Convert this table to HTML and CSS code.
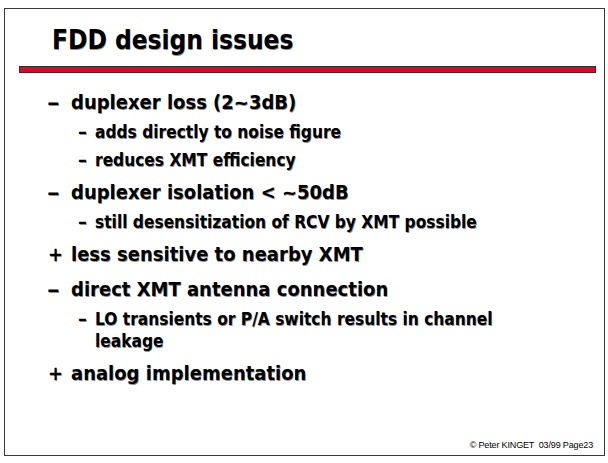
FILE: index.html
```html
<!DOCTYPE html>
<html lang="en">
<head>
<meta charset="utf-8">
<title>FDD design issues</title>
<link rel="stylesheet" href="styles.css">
</head>
<body>
<div class="slide">
  <h1 class="title">FDD design issues</h1>
  <div class="rule"></div>
  <ul class="points">
    <li class="l1"><span class="mark"><span class="dash">–</span></span><span class="txt">duplexer loss (2~3dB)</span></li>
    <li class="l2"><span class="mark"><span class="dash">–</span></span><span class="txt">adds directly to noise figure</span></li>
    <li class="l2"><span class="mark"><span class="dash">–</span></span><span class="txt">reduces XMT efficiency</span></li>
    <li class="l1"><span class="mark"><span class="dash">–</span></span><span class="txt">duplexer isolation &lt; ~50dB</span></li>
    <li class="l2"><span class="mark"><span class="dash">–</span></span><span class="txt">still desensitization of RCV by XMT possible</span></li>
    <li class="l1"><span class="mark plus">+</span><span class="txt">less sensitive to nearby XMT</span></li>
    <li class="l1"><span class="mark"><span class="dash">–</span></span><span class="txt">direct XMT antenna connection</span></li>
    <li class="l2"><span class="mark"><span class="dash">–</span></span><span class="txt">LO transients or P/A switch results in channel leakage</span></li>
    <li class="l1"><span class="mark plus">+</span><span class="txt">analog implementation</span></li>
  </ul>
  <div class="footer">© Peter KINGET  03/99 Page23</div>
</div>
</body>
</html>
```
FILE: styles.css
```css
html, body {
  margin: 0;
  padding: 0;
  background: #ffffff;
}
.slide {
  box-sizing: border-box;
  margin: 8px 0 0 4px;
  width: 601px;
  height: 448px;
  border: 1px solid #3a3a3a;
  display: flex;
  flex-direction: column;
  font-family: "DejaVu Sans Condensed", "DejaVu Sans", sans-serif;
  font-weight: bold;
  color: #000;
  text-shadow: 0.6px 0.6px 0 rgba(0, 0, 0, 0.45);
}
.title {
  margin: 16px 0 0 47px;
  font-size: 26px;
  line-height: 30px;
  font-weight: bold;
}
.rule {
  margin: 11px 0 0 14px;
  width: 577px;
  height: 7px;
  box-sizing: border-box;
  background: #e8002d;
  border: 1px solid #3a2a2a;
}
.points {
  list-style: none;
  margin: 16px 0 0 0;
  padding: 0;
}
.points li {
  display: flex;
  align-items: baseline;
}
.l1 {
  font-size: 20px;
  line-height: 26px;
  padding-left: 42px;
  margin-top: 8px;
}
.l1 + .l1 {
  margin-top: 9px;
}
.l1:first-child {
  margin-top: 0;
}
.l2 {
  font-size: 17.2px;
  line-height: 22px;
  padding-left: 73px;
  margin-top: 6px;
  width: 430px;
}
.l1 .mark {
  flex: 0 0 24px;
}
.l2 .mark {
  flex: 0 0 17px;
}
.dash {
  display: inline-block;
  transform-origin: left center;
}
.l1 .dash {
  transform: scaleX(1.4);
}
.l2 .dash {
  transform: scaleX(1.15);
}
.l1 .plus {
  padding-left: 1px;
  flex-basis: 23px;
}
.footer {
  margin-top: auto;
  align-self: flex-end;
  padding: 0 11px 4px 0;
  font-family: "Liberation Sans", Arial, sans-serif;
  font-weight: normal;
  font-size: 9px;
  line-height: 12px;
  white-space: pre;
  letter-spacing: -0.15px;
  text-shadow: none;
}
```
